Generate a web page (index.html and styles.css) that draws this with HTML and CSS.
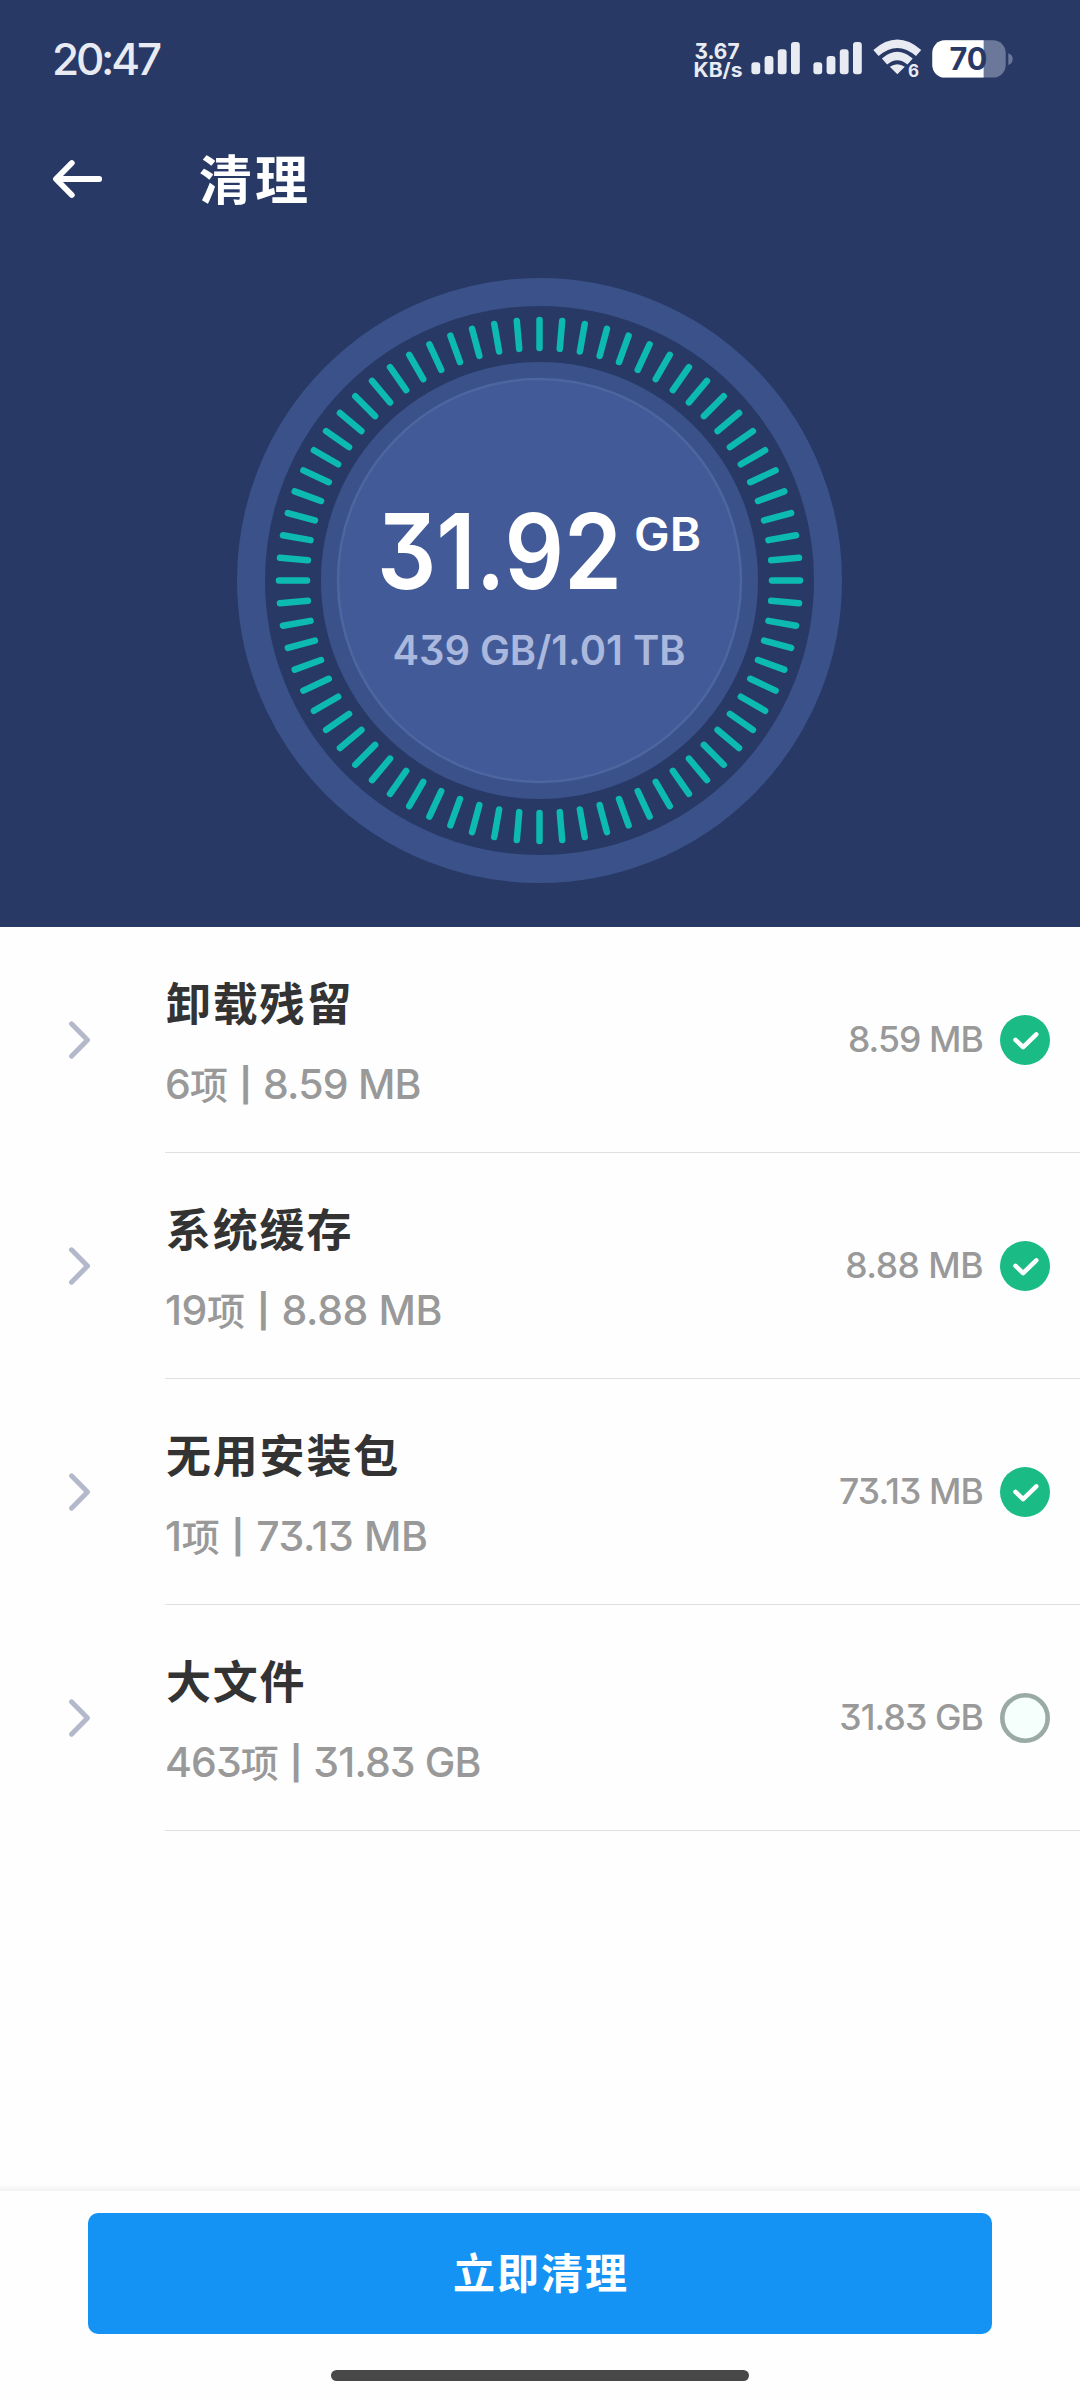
FILE: index.html
```html
<!DOCTYPE html>
<html lang="zh-CN">
<head>
<meta charset="utf-8">
<title>清理</title>
<link rel="stylesheet" href="styles.css">
</head>
<body>
<main class="screen">
  <section class="hero">
    <header class="status">
      <span class="clock">20:47</span>
      <svg class="status-icons" width="330" height="60" viewBox="690 30 330 60" aria-hidden="true">
        <g class="st-ink">
          <text class="st-rate" x="694.5" y="59.3" textLength="45" lengthAdjust="spacingAndGlyphs">3.67</text>
          <text class="st-rate st-unit" x="693.5" y="77.3" textLength="49" lengthAdjust="spacingAndGlyphs">KB/s</text>
          <g id="bars">
            <rect x="751.4" y="62.3" width="8.8" height="12" rx="3"/>
            <rect x="764.6" y="56" width="8.8" height="18.3" rx="3"/>
            <rect x="777.8" y="49.3" width="8.8" height="25" rx="3"/>
            <rect x="791" y="42" width="8.8" height="32.3" rx="3"/>
          </g>
          <use href="#bars" x="62"/>
          <path d="M897.3 74.3 889.8 66.8Q897.3 61.5 904.8 66.8Z"/>
        </g>
        <g class="st-arc">
          <path d="M876 53Q897.3 34.5 918.6 53"/>
          <path d="M884.5 61.5Q897.3 50.5 910.1 61.5"/>
        </g>
        <text class="st-six" x="908" y="77.3">6</text>
        <rect class="bat-rest" x="932.3" y="40.3" width="73.4" height="37.3" rx="12.5"/>
        <path class="bat-fill" d="M983.6 40.3H944.8a12.5 12.5 0 0 0-12.5 12.5v12.3a12.5 12.5 0 0 0 12.5 12.5H983.6Z"/>
        <path class="bat-rest" d="M1008.3 53.2q4.4 1.5 4.4 5.9t-4.4 5.9Z"/>
        <text class="bat-text" x="949.5" y="70" textLength="38" lengthAdjust="spacingAndGlyphs">70</text>
      </svg>
    </header>
    <nav class="titlebar">
      <svg class="back" width="56" height="44" viewBox="50 157 56 44" aria-hidden="true"><path d="M99.2 179H56.5M71.8 163 56 179l15.8 16"/></svg>
      <h1 class="title">清理</h1>
    </nav>
    <div class="dial">
      <svg width="606" height="606" viewBox="-302.5 -302.5 606 606">
        <defs>
          <path id="tick" d="M0-260.5V-232.5"/>
          <g id="fan">
            <use href="#tick"/><use href="#tick" transform="rotate(5)"/><use href="#tick" transform="rotate(10)"/>
            <use href="#tick" transform="rotate(15)"/><use href="#tick" transform="rotate(20)"/><use href="#tick" transform="rotate(25)"/>
            <use href="#tick" transform="rotate(30)"/><use href="#tick" transform="rotate(35)"/><use href="#tick" transform="rotate(40)"/>
          </g>
        </defs>
        <circle class="ring" r="288.5"/>
        <circle class="disc" r="218.5"/>
        <circle class="core" r="201.5"/>
        <g class="ticks">
          <use href="#fan"/><use href="#fan" transform="rotate(45)"/><use href="#fan" transform="rotate(90)"/><use href="#fan" transform="rotate(135)"/>
          <use href="#fan" transform="rotate(180)"/><use href="#fan" transform="rotate(225)"/><use href="#fan" transform="rotate(270)"/><use href="#fan" transform="rotate(315)"/>
        </g>
        <text class="amount" x="-162.5" y="8" textLength="245" lengthAdjust="spacingAndGlyphs">31.92</text>
        <text class="unit" x="94.5" y="-29.5" textLength="67" lengthAdjust="spacingAndGlyphs">GB</text>
        <text class="usage" x="-147" y="84.5" textLength="293" lengthAdjust="spacingAndGlyphs">439 GB/1.01 TB</text>
      </svg>
    </div>
  </section>

  <ul class="list">
    <li class="row">
      <svg class="chevron" width="28" height="44" viewBox="0 0 28 44"><path d="M6.5 5.8 22.5 22 6.5 38.2"/></svg>
      <div class="body">
        <div class="info"><h2 class="name">卸载残留</h2><p class="detail">6<span class="cjk">项</span> <span class="bar">|</span> 8.59 MB</p></div>
        <span class="size">8.59 MB</span>
        <svg class="check" width="50" height="50" viewBox="0 0 50 50"><circle class="on" cx="25" cy="25" r="25"/><path d="M15.5 24.8 23.1 32.2 36.3 19.3"/></svg>
      </div>
    </li>
    <li class="row">
      <svg class="chevron" width="28" height="44" viewBox="0 0 28 44"><path d="M6.5 5.8 22.5 22 6.5 38.2"/></svg>
      <div class="body">
        <div class="info"><h2 class="name">系统缓存</h2><p class="detail loose">19<span class="cjk">项</span> <span class="bar">|</span> 8.88 MB</p></div>
        <span class="size wide">8.88 MB</span>
        <svg class="check" width="50" height="50" viewBox="0 0 50 50"><circle class="on" cx="25" cy="25" r="25"/><path d="M15.5 24.8 23.1 32.2 36.3 19.3"/></svg>
      </div>
    </li>
    <li class="row">
      <svg class="chevron" width="28" height="44" viewBox="0 0 28 44"><path d="M6.5 5.8 22.5 22 6.5 38.2"/></svg>
      <div class="body">
        <div class="info"><h2 class="name">无用安装包</h2><p class="detail loose">1<span class="cjk">项</span> <span class="bar">|</span> 73.13 MB</p></div>
        <span class="size">73.13 MB</span>
        <svg class="check" width="50" height="50" viewBox="0 0 50 50"><circle class="on" cx="25" cy="25" r="25"/><path d="M15.5 24.8 23.1 32.2 36.3 19.3"/></svg>
      </div>
    </li>
    <li class="row">
      <svg class="chevron" width="28" height="44" viewBox="0 0 28 44"><path d="M6.5 5.8 22.5 22 6.5 38.2"/></svg>
      <div class="body">
        <div class="info"><h2 class="name">大文件</h2><p class="detail tight">463<span class="cjk">项</span> <span class="bar">|</span> 31.83 GB</p></div>
        <span class="size">31.83 GB</span>
        <svg class="check" width="50" height="50" viewBox="0 0 50 50"><circle class="off" cx="25" cy="25" r="22.7"/></svg>
      </div>
    </li>
  </ul>
  <footer class="footer">
    <button class="clean" type="button">立即清理</button>
    <div class="home"></div>
  </footer>
</main>
</body>
</html>
```
FILE: styles.css
```css
* { box-sizing: border-box; margin: 0; padding: 0; }

body {
  font-family: Inter, "Noto Sans CJK SC", sans-serif;
  font-feature-settings: "cv09" 1;
  background: #fefefe;
}

.screen { width: 1080px; height: 2400px; display: flex; flex-direction: column; overflow: hidden; }
svg { display: block; flex: none; }

.hero { height: 927px; background: #283966; display: flex; flex-direction: column; }

.status { height: 90px; padding: 30px 60px 0 52px; display: flex; justify-content: space-between; }
.clock { font-size: 44px; line-height: 58px; font-weight: 500; letter-spacing: -3.2px; color: #e9ebf2; }
.st-ink { fill: #e9ebf2; }
.st-rate { font-size: 22px; font-weight: 700; }
.st-unit { font-size: 19.5px; }
.st-arc path { fill: none; stroke: #e9ebf2; stroke-width: 8; }
.st-six { font-size: 17px; font-weight: 700; fill: #e9ebf2; }
.bat-rest { fill: #6c7899; }
.bat-fill { fill: #fff; }
.bat-text { font-size: 31px; font-weight: 700; fill: #283966; }

.titlebar { height: 178px; padding-left: 50px; display: flex; align-items: center; gap: 93px; }
.back path { fill: none; stroke: #fff; stroke-width: 5.8; stroke-linecap: round; stroke-linejoin: round; }
.title { padding-top: 3px; font-size: 53px; line-height: 60px; font-weight: 700; letter-spacing: 3px; color: #fff; }

.dial { display: flex; justify-content: center; padding-top: 10px; }
.ring { fill: none; stroke: #3a5289; stroke-width: 28; }
.disc { fill: #3a5289; }
.core { fill: #425b98; stroke: #4d66a1; stroke-width: 2.5; }
.ticks { fill: none; stroke: #0dbab1; stroke-width: 6.5; stroke-linecap: round; }
.amount { font-size: 104px; font-weight: 600; fill: #fff; }
.unit { font-size: 46px; font-weight: 600; fill: #fff; }
.usage { font-size: 40.5px; font-weight: 600; fill: #abb8dd; }

.list { flex: 1; list-style: none; }
.row { height: 226px; display: flex; align-items: center; padding-left: 65px; gap: 72px; }
.body { flex: 1; height: 226px; display: flex; align-items: center; border-bottom: 1px solid #e0e0e0; padding-right: 30px; }
.info { flex: 1; padding-top: 10px; }
.name { font-size: 45px; line-height: 60px; font-weight: 700; letter-spacing: 1.8px; color: #333; padding-left: 1px; }
.detail { margin-top: 19px; font-size: 41px; line-height: 60px; font-weight: 500; letter-spacing: -.8px; color: #999; }
.loose { letter-spacing: -.4px; }
.tight { letter-spacing: -.9px; }
.cjk { font-size: 38px; }
.bar { display: inline-block; font-size: 33px; line-height: 40px; font-weight: 700; margin: 0 2px; transform: translateY(-2px); }
.size { font-size: 35.5px; font-weight: 500; letter-spacing: -.9px; color: #999; margin-right: 17px; }
.wide { letter-spacing: -.5px; }
.check path { fill: none; stroke: #fff; stroke-width: 4.5; stroke-linecap: round; stroke-linejoin: round; }
.on { fill: #1abb85; }
.off { fill: #f5fffc; stroke: #9aaba5; stroke-width: 4.6; }
.chevron path { fill: none; stroke: #b4b8cb; stroke-width: 5; stroke-linecap: round; stroke-linejoin: round; }

.footer { height: 216px; padding-top: 7px; display: flex; flex-direction: column; align-items: center; background: linear-gradient(#fefefe, #f2f2f2 7px, #fefefe 7px); }
.clean { margin-top: 22px; width: 904px; height: 121px; border: 0; border-radius: 10px; background: #1493f5; color: #fff; font: 700 42px/121px Inter, "Noto Sans CJK SC", sans-serif; letter-spacing: 2px; padding-left: 2px; }
.home { margin-top: 36px; width: 418px; height: 11px; border-radius: 5.5px; background: #484848; }
```
